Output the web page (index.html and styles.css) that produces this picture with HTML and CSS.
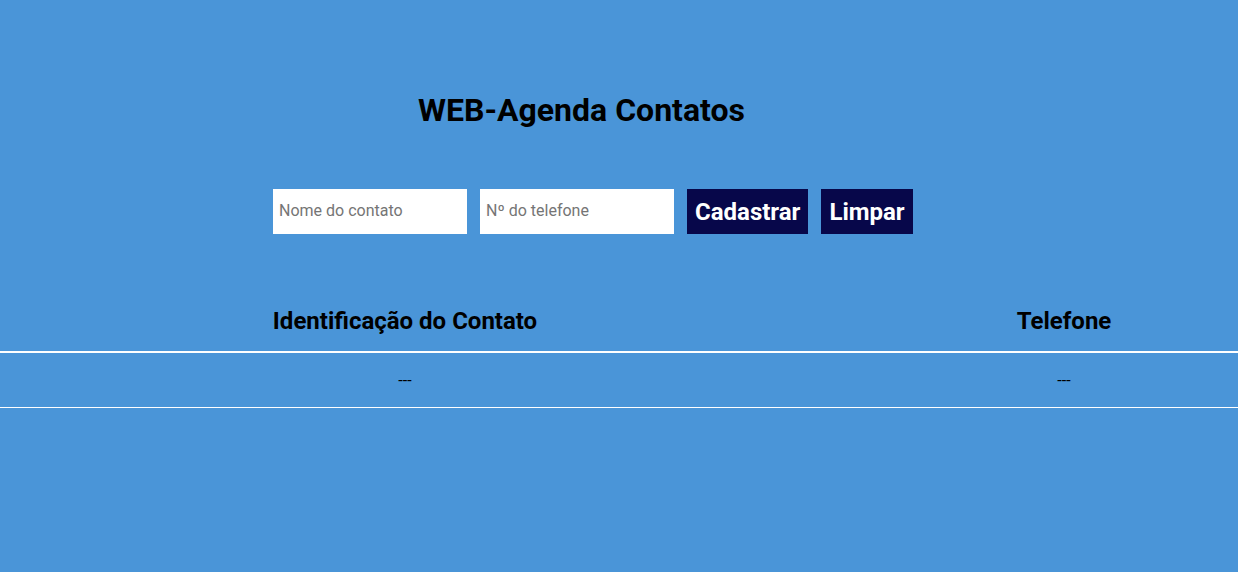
FILE: index.html
```html
<!DOCTYPE html>
<html lang="pt-BR">
<head>
<meta charset="utf-8">
<title>WEB-Agenda Contatos</title>
<link rel="stylesheet" href="styles.css">
</head>
<body>
  <main class="page">
    <h1 class="title">WEB-Agenda Contatos</h1>
    <form class="form">
      <input class="field" type="text" placeholder="Nome do contato">
      <input class="field" type="text" placeholder="Nº do telefone">
      <button class="btn" type="button">Cadastrar</button>
      <button class="btn" type="button">Limpar</button>
    </form>
    <table class="table">
      <thead>
        <tr>
          <th class="col-name">Identificação do Contato</th>
          <th class="col-phone">Telefone</th>
        </tr>
      </thead>
      <tbody>
        <tr>
          <td class="col-name">---</td>
          <td class="col-phone">---</td>
        </tr>
      </tbody>
    </table>
  </main>
</body>
</html>
```

FILE: styles.css
```css
html, body {
  margin: 0;
  padding: 0;
  background: #4a95d8;
  height: 100%;
}

body {
  font-family: Roboto, "Liberation Sans", sans-serif;
  color: #000;
}

.page {
  padding-top: 92px;
}

.title {
  margin: 0 0 0 418px;
  font-size: 32px;
  font-weight: 700;
  line-height: 37px;
}

.form {
  display: flex;
  gap: 13px;
  margin: 60px 0 0 273px;
  height: 45px;
}

.field {
  width: 194px;
  height: 45px;
  box-sizing: border-box;
  border: none;
  padding: 0 6px 2px;
  font-family: Roboto, "Liberation Sans", sans-serif;
  font-size: 16px;
  background: #fff;
  outline: none;
}

.field::placeholder {
  color: #757575;
}

.btn {
  height: 45px;
  border: none;
  padding: 0 8px;
  background: #07074a;
  color: #fff;
  font-family: Roboto, "Liberation Sans", sans-serif;
  font-size: 24px;
  font-weight: 700;
  cursor: pointer;
}

.table {
  width: 100%;
  border-collapse: collapse;
  margin-top: 73px;
}

.table th {
  font-size: 24px;
  font-weight: 700;
  line-height: 28px;
  padding: 0 0 16px;
  border-bottom: 2px solid #fff;
}

.table td {
  font-size: 16px;
  line-height: 20px;
  padding: 18px 0 16px;
  border-bottom: 1px solid #fff;
  text-align: center;
}

.col-name {
  width: 810px;
  text-align: center;
}

.table .col-phone {
  padding-left: 80px;
  text-align: center;
}
```
